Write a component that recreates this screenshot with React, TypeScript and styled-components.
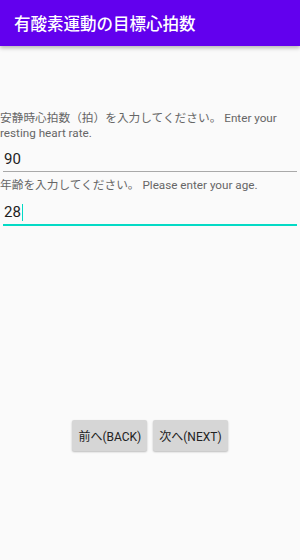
import React from 'react';
import styled, { createGlobalStyle } from 'styled-components';

const GlobalStyle = createGlobalStyle`
  html, body {
    margin: 0;
    padding: 0;
    background: #fafafa;
  }
  body {
    font-family: Roboto, 'Noto Sans CJK JP', sans-serif;
  }
`;

const Screen = styled.div`
  width: 300px;
  height: 560px;
  background: #fafafa;
  display: flex;
  flex-direction: column;
  overflow: hidden;
`;

const AppBar = styled.header`
  height: 46px;
  flex-shrink: 0;
  display: flex;
  align-items: center;
  padding-left: 14px;
  background-color: #6200ee;
  color: #ffffff;
  font-size: 16.5px;
  font-weight: 500;
  box-shadow: 0 2px 4px rgba(0, 0, 0, 0.28);
`;

const Content = styled.main`
  display: flex;
  flex-direction: column;
  padding-top: 65px;
`;

const Label = styled.div`
  font-size: 11.7px;
  line-height: 15px;
  color: #666666;
  padding-right: 4px;
`;

const Field = styled.div<{ $focused?: boolean }>`
  margin: 0 3px 6px;
  padding: ${(p) => (p.$focused ? '9px 1px 2px' : '8px 1px 2px')};
  height: 20px;
  display: flex;
  align-items: center;
  font-size: 15px;
  color: #1e1e1e;
  border-bottom: ${(p) => (p.$focused ? '2px solid #03dac5' : '1.5px solid #a9a9a9')};
`;

const Caret = styled.span`
  display: inline-block;
  width: 1.5px;
  height: 17px;
  margin-left: 1px;
  background: #03dac5;
`;

const ButtonRow = styled.div`
  display: flex;
  justify-content: center;
  gap: 6px;
  margin-top: 188px;
`;

const NavButton = styled.button`
  height: 31px;
  padding: 0 6px;
  border: none;
  border-radius: 2px;
  background: #d6d6d6;
  color: #222222;
  font-family: Roboto, 'Noto Sans CJK JP', sans-serif;
  font-size: 12px;
  box-shadow: 0 1px 2px rgba(0, 0, 0, 0.25);
  cursor: pointer;
`;

const App: React.FC = () => {
  return (
    <Screen>
      <GlobalStyle />
      <AppBar>有酸素運動の目標心拍数</AppBar>
      <Content>
        <Label>安静時心拍数（拍）を入力してください。 Enter your resting heart rate.</Label>
        <Field>90</Field>
        <Label>年齢を入力してください。 Please enter your age.</Label>
        <Field $focused>
          28
          <Caret />
        </Field>
        <ButtonRow>
          <NavButton>前へ(BACK)</NavButton>
          <NavButton>次へ(NEXT)</NavButton>
        </ButtonRow>
      </Content>
    </Screen>
  );
};

export default App;
